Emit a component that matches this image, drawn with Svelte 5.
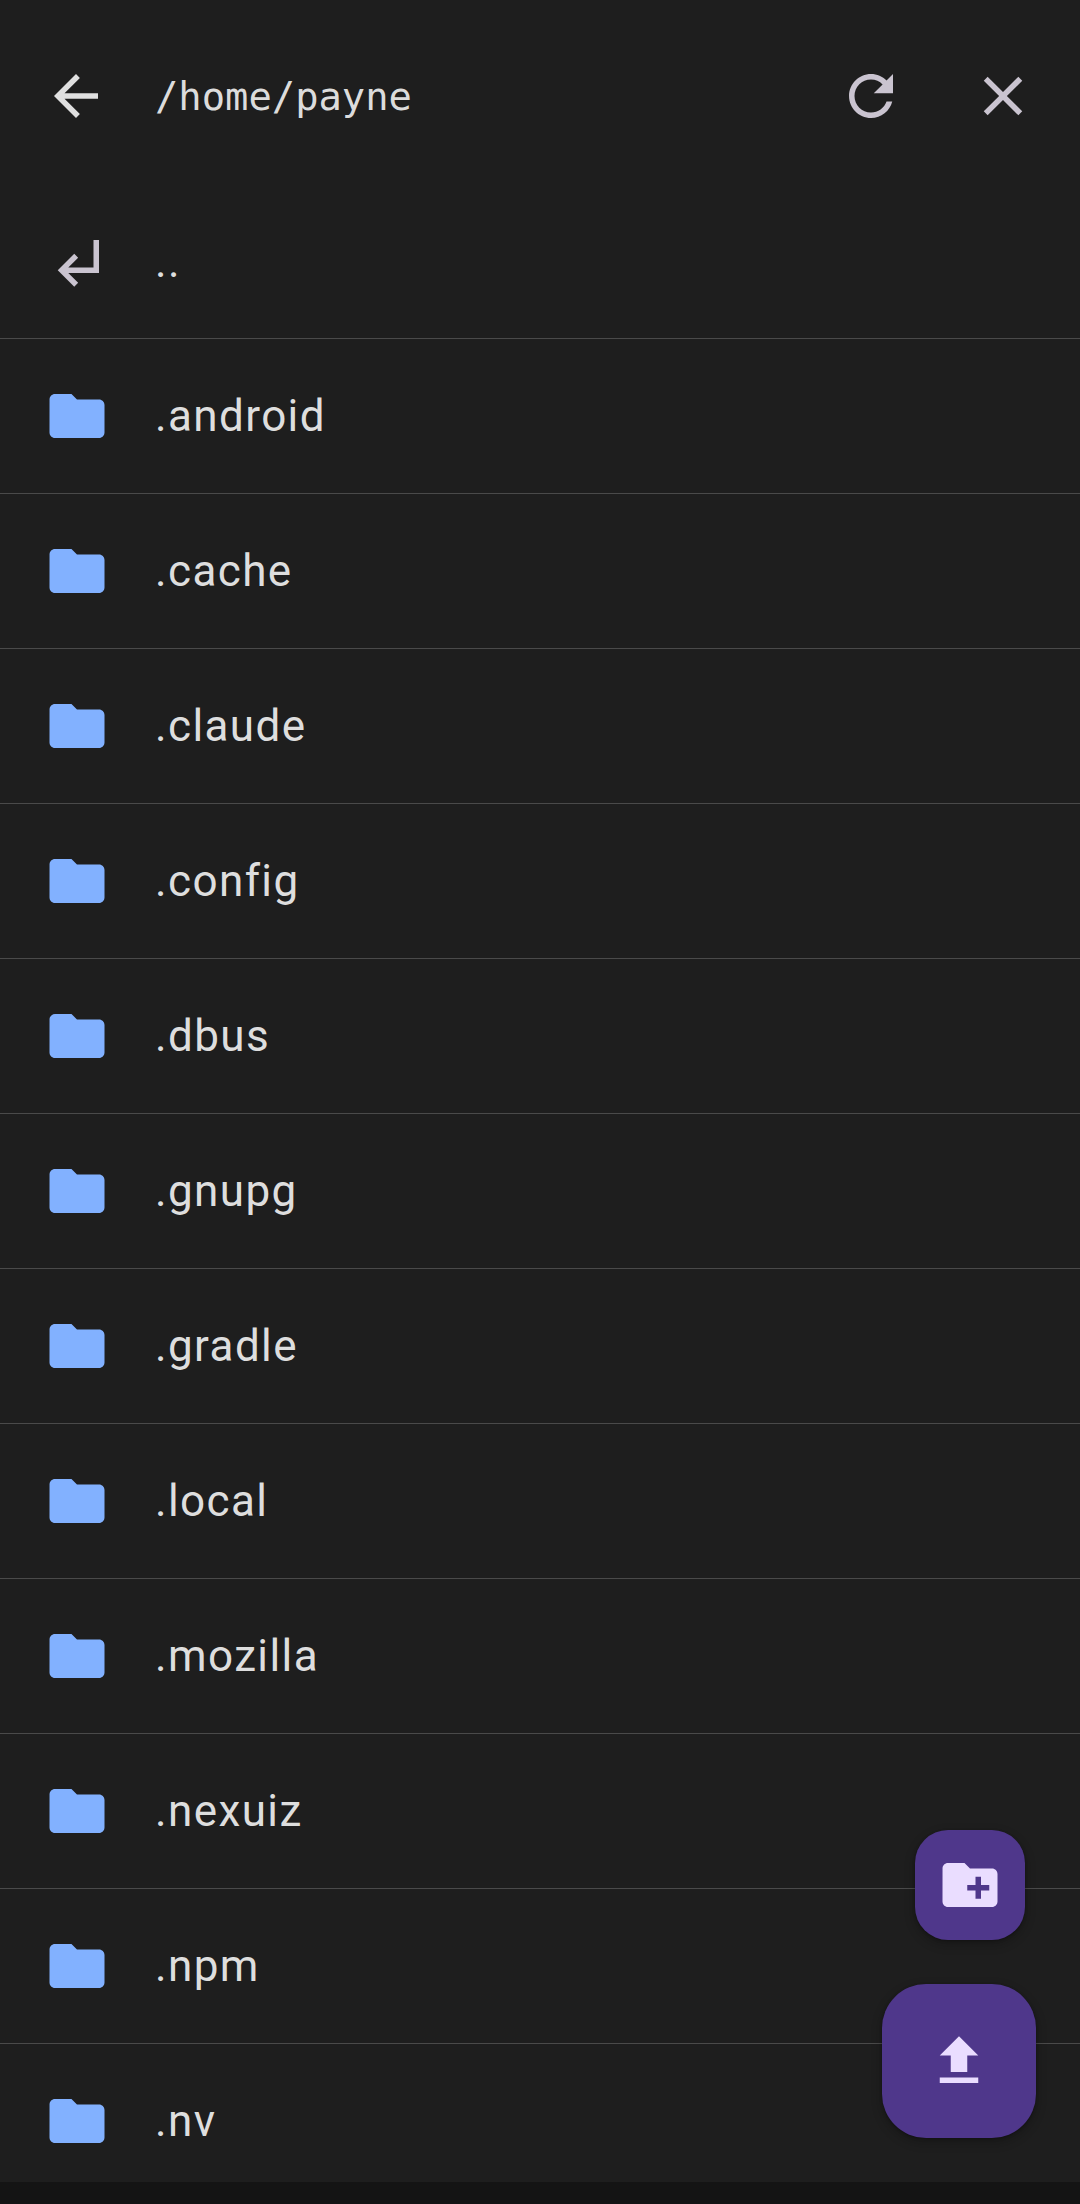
<script>
  const folders = ['.android', '.cache', '.claude', '.config', '.dbus', '.gnupg', '.gradle', '.local', '.mozilla', '.nexuiz', '.npm', '.nv']
</script>

<div class="screen">
  <header class="topbar">
    <svg class="icon back" viewBox="0 0 24 24"><path d="M20 11H7.83l5.59-5.59L12 4l-8 8 8 8 1.41-1.41L7.83 13H20v-2z"/></svg>
    <span class="path">/home/payne</span>
    <svg class="icon muted" viewBox="0 0 24 24"><path d="M17.65 6.35C16.2 4.9 14.21 4 12 4c-4.42 0-7.99 3.58-7.99 8s3.57 8 7.99 8c3.73 0 6.84-2.55 7.73-6h-2.08c-.82 2.33-3.04 4-5.65 4-3.31 0-6-2.69-6-6s2.69-6 6-6c1.66 0 3.14.69 4.22 1.78L13 11h7V4l-2.35 2.35z"/></svg>
    <svg class="icon muted" viewBox="0 0 24 24"><path d="M19 6.41L17.59 5 12 10.59 6.41 5 5 6.41 10.59 12 5 17.59 6.41 19 12 13.41 17.59 19 19 17.59 13.41 12z"/></svg>
  </header>

  <main class="list">
    <div class="row up">
      <svg class="icon muted" viewBox="0 0 24 24"><path d="M11 9l1.42 1.42L8.83 14H18V4h2v12H8.83l3.59 3.58L11 21l-6-6 6-6z"/></svg>
      <span class="name">..</span>
    </div>
    {#each folders as name}
      <div class="row">
        <svg class="icon folder" viewBox="0 0 24 24"><path d="M10 4H4c-1.1 0-1.99.9-1.99 2L2 18c0 1.1.9 2 2 2h16c1.1 0 2-.9 2-2V8c0-1.1-.9-2-2-2h-8l-2-2z"/></svg>
        <span class="name">{name}</span>
      </div>
    {/each}
  </main>

  <div class="navbar"></div>

  <button class="fab small" aria-label="New folder">
    <svg class="icon" viewBox="0 0 24 24"><path d="M20 6h-8l-2-2H4c-1.11 0-1.99.89-1.99 2L2 18c0 1.11.89 2 2 2h16c1.11 0 2-.89 2-2V8c0-1.11-.89-2-2-2zm-1 8h-3v3h-2v-3h-3v-2h3V9h2v3h3v2z"/></svg>
  </button>
  <button class="fab large" aria-label="Upload">
    <svg class="icon" viewBox="0 0 24 24"><path d="M9 16h6v-6h4l-7-7-7 7h4zm-4 2h14v2H5z"/></svg>
  </button>
</div>

<style>
  :global(body) {
    background: #1e1e1e;
  }

  .screen {
    position: relative;
    display: flex;
    flex-direction: column;
    width: 1080px;
    height: 2204px;
    overflow: hidden;
    background: #1e1e1e;
    font-family: Roboto, sans-serif;
  }

  .icon {
    flex: none;
    width: 66px;
    height: 66px;
    fill: currentColor;
  }

  .topbar {
    flex: none;
    box-sizing: border-box;
    display: flex;
    align-items: center;
    gap: 66px;
    height: 186px;
    padding: 63px 44px 57px 43px;
  }

  .topbar .back {
    color: #e0e0e0;
  }

  .path {
    flex: 1;
    margin-left: -20px;
    font-family: "DejaVu Sans Mono", monospace;
    font-size: 38.8px;
    color: #dcdcdc;
  }

  .muted {
    color: #cac4d0;
  }

  .list {
    flex: 1;
    min-height: 0;
    overflow: hidden;
  }

  .row {
    display: flex;
    align-items: center;
    gap: 45px;
    box-sizing: border-box;
    height: 155px;
    padding-left: 44px;
    border-bottom: 1.5px solid #4a4a4a;
  }

  .row.up {
    height: 153px;
  }

  .folder {
    color: #82b1ff;
  }

  .name {
    font-size: 44px;
    letter-spacing: 1.4px;
    color: #dedede;
  }

  .navbar {
    flex: none;
    height: 22px;
    background: #141414;
  }

  .fab {
    position: absolute;
    display: flex;
    align-items: center;
    justify-content: center;
    padding: 0;
    border: none;
    background: #4f378b;
    color: #eaddff;
    box-shadow: 0 4px 8px 3px rgba(0, 0, 0, 0.15), 0 1px 3px rgba(0, 0, 0, 0.3);
  }

  .small {
    right: 55px;
    top: 1830px;
    width: 110px;
    height: 110px;
    border-radius: 33px;
  }

  .large {
    right: 44px;
    top: 1984px;
    width: 154px;
    height: 154px;
    border-radius: 44px;
  }
</style>
